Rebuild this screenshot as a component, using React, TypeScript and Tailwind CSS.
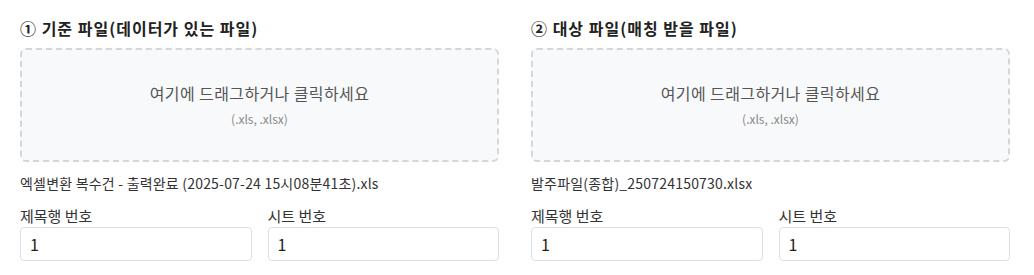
const FONT = { fontFamily: '"Noto Sans CJK KR", "Noto Sans", sans-serif' };

function FilePanel({
  title,
  fileName,
}: {
  title: string;
  fileName: string;
}) {
  return (
    <div className="flex flex-col">
      <h3 className="h-[24px] text-[16px] font-bold leading-[24px] tracking-[1px] text-[#222]">{title}</h3>
      <div className="mt-[8px] flex h-[114px] flex-col items-center justify-center rounded-md border-2 border-dashed border-[#d4d6da] bg-[#f8f9fb]">
        <div className="text-[16px] leading-[22px] tracking-[0.4px] text-[#555]">여기에 드래그하거나 클릭하세요</div>
        <div className="mt-[6px] text-[12px] leading-[18px] text-[#888]">(.xls, .xlsx)</div>
      </div>
      <div className="mt-[11px] text-[14px] leading-[20px] tracking-[0.2px] text-[#333]">{fileName}</div>
      <div className="mt-[13px] grid grid-cols-2 gap-[16px]">
        <NumberField label="제목행 번호" />
        <NumberField label="시트 번호" />
      </div>
    </div>
  );
}

function NumberField({ label }: { label: string }) {
  return (
    <label className="flex flex-col">
      <span className="text-[15px] leading-[20px] text-[#333]">{label}</span>
      <input
        type="number"
        defaultValue={1}
        className="mt-[1px] h-[34px] w-full rounded-[4px] border border-[#dcdfe3] bg-white px-[9px] text-[16px] text-[#222] outline-none"
      />
    </label>
  );
}

export default function App() {
  return (
    <div className="bg-white pb-4 pl-5 pr-6 pt-[16px]" style={FONT}>
      <div className="grid grid-cols-2 gap-8">
        <FilePanel
          title="① 기준 파일(데이터가 있는 파일)"
          fileName="엑셀변환 복수건 - 출력완료 (2025-07-24 15시08분41초).xls"
        />
        <FilePanel
          title="② 대상 파일(매칭 받을 파일)"
          fileName="발주파일(종합)_250724150730.xlsx"
        />
      </div>
    </div>
  );
}
